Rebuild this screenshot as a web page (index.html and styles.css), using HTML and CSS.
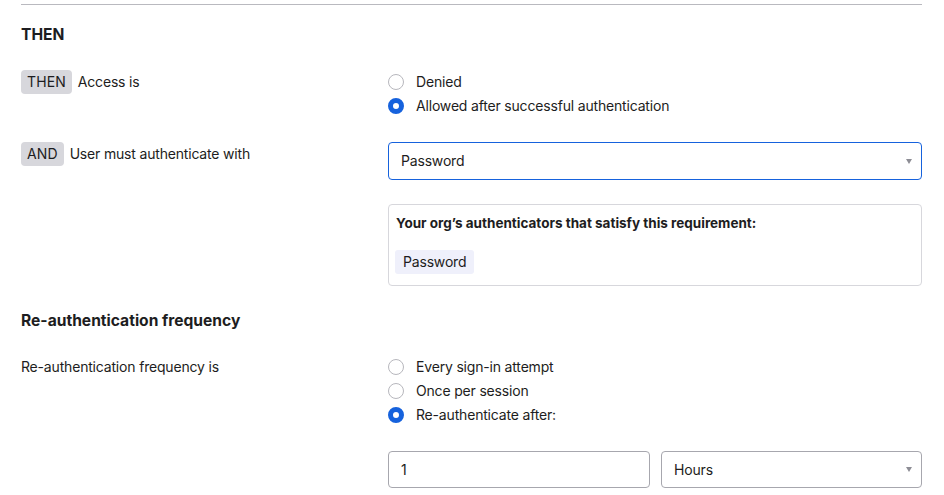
FILE: index.html
```html
<!DOCTYPE html>
<html lang="en">
<head>
<meta charset="utf-8">
<title>Rule</title>
<link rel="stylesheet" href="styles.css">
</head>
<body>
<div class="page">
  <div class="rule"></div>
  <h2 class="section-title first">THEN</h2>

  <div class="row row-first">
    <div class="left"><span class="badge">THEN</span><span class="label">Access is</span></div>
    <div class="right">
      <div class="radios">
        <div class="radio"><span class="dot"></span><span>Denied</span></div>
        <div class="radio"><span class="dot on"></span><span>Allowed after successful authentication</span></div>
      </div>
    </div>
  </div>

  <div class="row">
    <div class="left"><span class="badge">AND</span><span class="label">User must authenticate with</span></div>
    <div class="right">
      <div class="select focused"><span>Password</span><span class="caret"></span></div>
      <div class="info">
        <div class="info-title">Your org’s authenticators that satisfy this requirement:</div>
        <span class="chip">Password</span>
      </div>
    </div>
  </div>

  <h2 class="section-title">Re-authentication frequency</h2>

  <div class="row">
    <div class="left"><span class="label plain">Re-authentication frequency is</span></div>
    <div class="right">
      <div class="radios">
        <div class="radio"><span class="dot"></span><span>Every sign-in attempt</span></div>
        <div class="radio"><span class="dot"></span><span>Once per session</span></div>
        <div class="radio"><span class="dot on"></span><span>Re-authenticate after:</span></div>
      </div>
      <div class="pair">
        <div class="input">1</div>
        <div class="select"><span>Hours</span><span class="caret"></span></div>
      </div>
    </div>
  </div>
</div>
</body>
</html>
```

FILE: styles.css
```css
* { box-sizing: border-box; }
html, body { margin: 0; padding: 0; background: #fff; }
body {
  font-family: Inter, "Noto Sans", "Liberation Sans", sans-serif;
  font-size: 14px;
  letter-spacing: -0.18px;
  color: #1d1d21;
  line-height: 20px;
}
.page {
  width: 944px;
  padding: 4px 22px 0 21px;
}
.rule { border-top: 1px solid #b9b9bf; }
.section-title {
  margin: 25px 0 0;
  font-size: 15.6px;
  font-weight: 700;
  line-height: 20px;
  letter-spacing: 0;
}
.section-title.first { margin-top: 20px; }
.row {
  display: flex;
  margin-top: 24px;
}
.row-first { margin-top: 25px; }
.left {
  width: 367px;
  display: flex;
  align-items: flex-start;
  gap: 6px;
}
.right {
  flex: 1;
  display: flex;
  flex-direction: column;
  gap: 24px;
}
.badge {
  background: #d7d7dc;
  border-radius: 4px;
  padding: 2px 6px;
  line-height: 20px;
  letter-spacing: 0.1px;
}
.label { line-height: 24px; }
.radios { display: flex; flex-direction: column; }
.radio {
  display: flex;
  align-items: center;
  height: 24px;
  gap: 12px;
}
.dot {
  width: 16px;
  height: 16px;
  border-radius: 50%;
  border: 1.5px solid #b7b7bd;
  background: #fff;
  flex: none;
}
.dot.on {
  border: 5px solid #1662dd;
}
.select, .input {
  height: 38px;
  border: 1px solid #a7a7ae;
  border-radius: 4px;
  display: flex;
  align-items: center;
  justify-content: space-between;
  padding: 0 9px 0 12px;
}
.select.focused { border-color: #1662dd; }
.caret {
  width: 0;
  height: 0;
  border-left: 3.5px solid transparent;
  border-right: 3.5px solid transparent;
  border-top: 5px solid #8d8d95;
}
.info {
  border: 1px solid #d7d7dc;
  border-radius: 4px;
  padding: 8px 7px 11px 7px;
  height: 82px;
  display: flex;
  flex-direction: column;
  align-items: flex-start;
  gap: 17px;
}
.info-title { font-weight: 700; font-size: 13.5px; letter-spacing: 0; }
.chip {
  background: #eff0fb;
  border-radius: 3px;
  padding: 2px 8px;
  margin-left: -1px;
}
.pair {
  display: flex;
  gap: 11px;
}
.pair .input { width: 262px; height: 37px; }
.pair .select { flex: 1; height: 37px; }
```
